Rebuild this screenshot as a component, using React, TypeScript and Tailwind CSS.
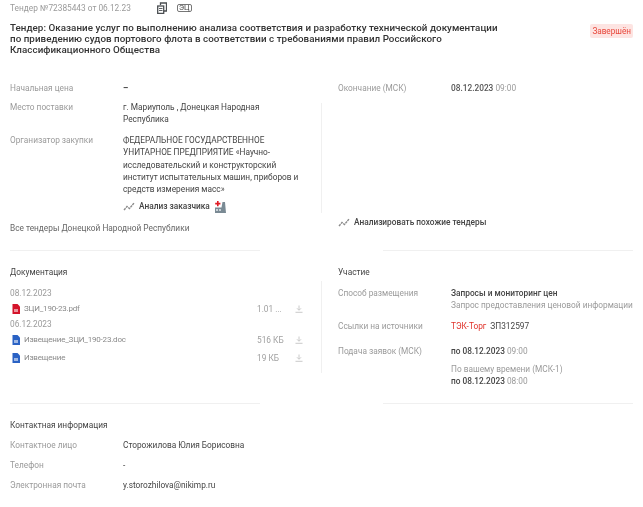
const Trend = () => (
  <svg width="12" height="9" viewBox="0 0 12 9" fill="none" className="shrink-0">
    <path d="M1 8 L4 4.5 L6.5 6.5 L11 1" stroke="#8a8a8a" strokeWidth="1.4" strokeDasharray="2.4 0.7" />
  </svg>
);

const FileIcon = ({ color }: { color: string }) => (
  <svg width="8" height="10" viewBox="0 0 8 10" className="shrink-0">
    <path d="M0.5 0 H5.5 L8 2.5 V10 H0.5 Z" fill={color} />
    <rect x="2" y="5" width="4" height="3" fill="#ffffff" opacity="0.55" />
  </svg>
);

const Download = () => (
  <svg width="8" height="8" viewBox="0 0 8 8" fill="none" className="shrink-0">
    <path d="M4 0.5 V5 M2 3.3 L4 5.3 L6 3.3 M0.5 7.3 H7.5" stroke="#c4c4c4" strokeWidth="0.9" />
  </svg>
);

const Factory = () => (
  <svg width="11" height="12" viewBox="0 0 11 12" className="shrink-0">
    <path d="M0 12 V6.5 H6.5 L7.5 1 H10 L11 12 Z" fill="#7a8a94" />
    <path d="M1 8 H3 V10 H1 Z M4 8 H6 V10 H4 Z" fill="#c9d1d6" />
    <path d="M2 0 H3.6 V1.8 H5.4 V3.4 H3.6 V5.2 H2 V3.4 H0.2 V1.8 H2 Z" fill="#e01b24" />
  </svg>
);

const Coins = () => (
  <svg width="10" height="12" viewBox="0 0 10 12" fill="none" className="shrink-0">
    <path d="M3.5 3 V1 H9.5 V9 H7" stroke="#4b4f52" strokeWidth="1.3" />
    <rect x="0.7" y="4" width="6" height="7.4" fill="#ffffff" stroke="#4b4f52" strokeWidth="1.3" />
    <path d="M2 6.5 H5.5 M2 8.5 H5.5" stroke="#4b4f52" strokeWidth="0.9" />
  </svg>
);

const Row = ({ label, children, className = "" }: { label: string; children?: React.ReactNode; className?: string }) => (
  <div className={`flex ${className}`}>
    <div className="w-[113px] shrink-0 text-[#9a9a9a]">{label}</div>
    <div className="min-w-0 flex-1 text-[#444444]">{children}</div>
  </div>
);

const DocRow = ({ color, name, size, className = "" }: { color: string; name: string; size: string; className?: string }) => (
  <div className={`flex h-[12px] items-center ${className}`}>
    <div className="flex w-[13px] shrink-0 items-center pl-[2px]"><FileIcon color={color} /></div>
    <div className="ml-[1px] w-[233px] shrink-0 text-[8px] tracking-[-0.2px] text-[#8a8a8a]">{name}</div>
    <div className="w-[38px] shrink-0 text-[#a0a0a0]">{size}</div>
    <Download />
  </div>
);

export default function App() {
  return (
    <div className="relative h-[507px] w-[643px] overflow-hidden bg-white font-['Roboto',sans-serif] text-[8.3px] leading-[12.3px] blur-[0.4px]">
      <header className="flex h-[16px] items-center pl-[10px] text-[#9a9a9a]">
        <span className="w-[147px]">Тендер №72385443 от 06.12.23</span>
        <Coins />
        <span className="ml-[10px] rounded-[2px] border border-[#777777] px-[1px] text-[7.5px] leading-[6px] text-[#444444]">ЭЦ</span>
      </header>

      <div className="mt-[6px] flex h-[33px] items-start justify-between pl-[10px] pr-[10px]">
        <h1 className="w-[495px] text-[9.8px] font-medium leading-[11px] tracking-[0.04px] text-[#333333]">
          Тендер: Оказание услуг по выполнению анализа соответствия и разработку технической документации по приведению судов портового флота в соответствии с требованиями правил Российского Классификационного Общества
        </h1>
        <span className="mt-[2px] rounded-[2px] bg-[#fde4e2] px-[2px] py-[1px] text-[8.2px] leading-[12px] text-[#e8483c]">Завершён</span>
      </div>

      <main className="mt-[27px] grid grid-cols-[321px_322px]">
        <section className="pl-[10px] pr-[61px]">
          <Row label="Начальная цена" className="h-[19px]"><span className="font-bold">–</span></Row>
          <Row label="Место поставки" className="h-[33px]">г. Мариуполь , Донецкая Народная Республика</Row>
          <Row label="Организатор закупки">
            <div className="w-[180px]">ФЕДЕРАЛЬНОЕ ГОСУДАРСТВЕННОЕ УНИТАРНОЕ ПРЕДПРИЯТИЕ «Научно-исследовательский и конструкторский институт испытательных машин, приборов и средств измерения масс»</div>
            <div className="mt-[5px] flex items-center font-medium text-[#444444]">
              <Trend />
              <span className="ml-[4px] w-[76px]">Анализ заказчика</span>
              <Factory />
            </div>
          </Row>
          <div className="mt-[9px] text-[#666666]">Все тендеры Донецкой Народной Республики</div>
          <div className="mt-[16px] h-px bg-[#f0f0f0]" />
        </section>

        <section className="pr-[10px]">
          <div className="flex h-[16px] pl-[17px]">
            <span className="w-[113px] text-[#9a9a9a]">Окончание (МСК)</span>
            <span className="font-medium text-[#555555]">08.12.2023 <span className="font-normal text-[#9a9a9a]">09:00</span></span>
          </div>
          <div className="mt-[5px] h-[110px] border-l border-[#f0f0f0]" />
          <div className="mt-[3px] flex items-center pl-[17px] font-medium text-[#444444]">
            <Trend />
            <span className="ml-[4px]">Анализировать похожие тендеры</span>
          </div>
          <div className="ml-[62px] mt-[22px] h-px bg-[#f0f0f0]" />
        </section>

        <section className="pl-[10px] pr-[61px] pt-[15px]">
          <h2 className="text-[#444444]">Документация</h2>
          <div className="mt-[8px] text-[#9a9a9a]">08.12.2023</div>
          <DocRow color="#d4142a" name="ЗЦИ_190-23.pdf" size="1.01 ..." className="mt-[4px]" />
          <div className="mt-[3px] text-[#9a9a9a]">06.12.2023</div>
          <DocRow color="#2a62c4" name="Извещение_ЗЦИ_190-23.doc" size="516 КБ" className="mt-[4px]" />
          <DocRow color="#2a62c4" name="Извещение" size="19 КБ" className="mt-[6px]" />
        </section>

        <section className="pt-[15px]">
          <h2 className="pl-[17px] text-[#444444]">Участие</h2>
          <div className="mt-[2px] h-[92px] border-l border-[#f0f0f0] pl-[16px] pt-[6px]">
            <Row label="Способ размещения" className="h-[33px]">
              <div className="font-medium">Запросы и мониторинг цен</div>
              <div className="text-[#9a9a9a]">Запрос предоставления ценовой информации</div>
            </Row>
            <Row label="Ссылки на источники" className="h-[25px]">
              <span className="text-[#e0322a]">ТЭК-Торг</span>
              <span className="ml-[4px]">ЗП312597</span>
            </Row>
            <Row label="Подача заявок (МСК)" className="h-[18px]">
              <span className="font-medium">по 08.12.2023 </span><span className="text-[#9a9a9a]">09:00</span>
            </Row>
            <div className="pl-[113px] text-[#9a9a9a]">По вашему времени (МСК-1)</div>
          </div>
          <div className="mt-[2px] pl-[130px] font-medium text-[#444444]">по 08.12.2023 <span className="font-normal text-[#9a9a9a]">08:00</span></div>
        </section>
      </main>

      <div className="mt-[16px] grid grid-cols-[321px_322px]">
        <section className="pl-[10px] pr-[61px]">
          <div className="h-px bg-[#f0f0f0]" />
          <h2 className="mt-[15px] text-[#444444]">Контактная информация</h2>
          <Row label="Контактное лицо" className="mt-[8px] h-[20px]">Сторожилова Юлия Борисовна</Row>
          <Row label="Телефон" className="h-[20px]">-</Row>
          <Row label="Электронная почта">y.storozhilova@nikimp.ru</Row>
        </section>
        <section className="pr-[10px]">
          <div className="ml-[62px] h-px bg-[#f0f0f0]" />
        </section>
      </div>
    </div>
  );
}
